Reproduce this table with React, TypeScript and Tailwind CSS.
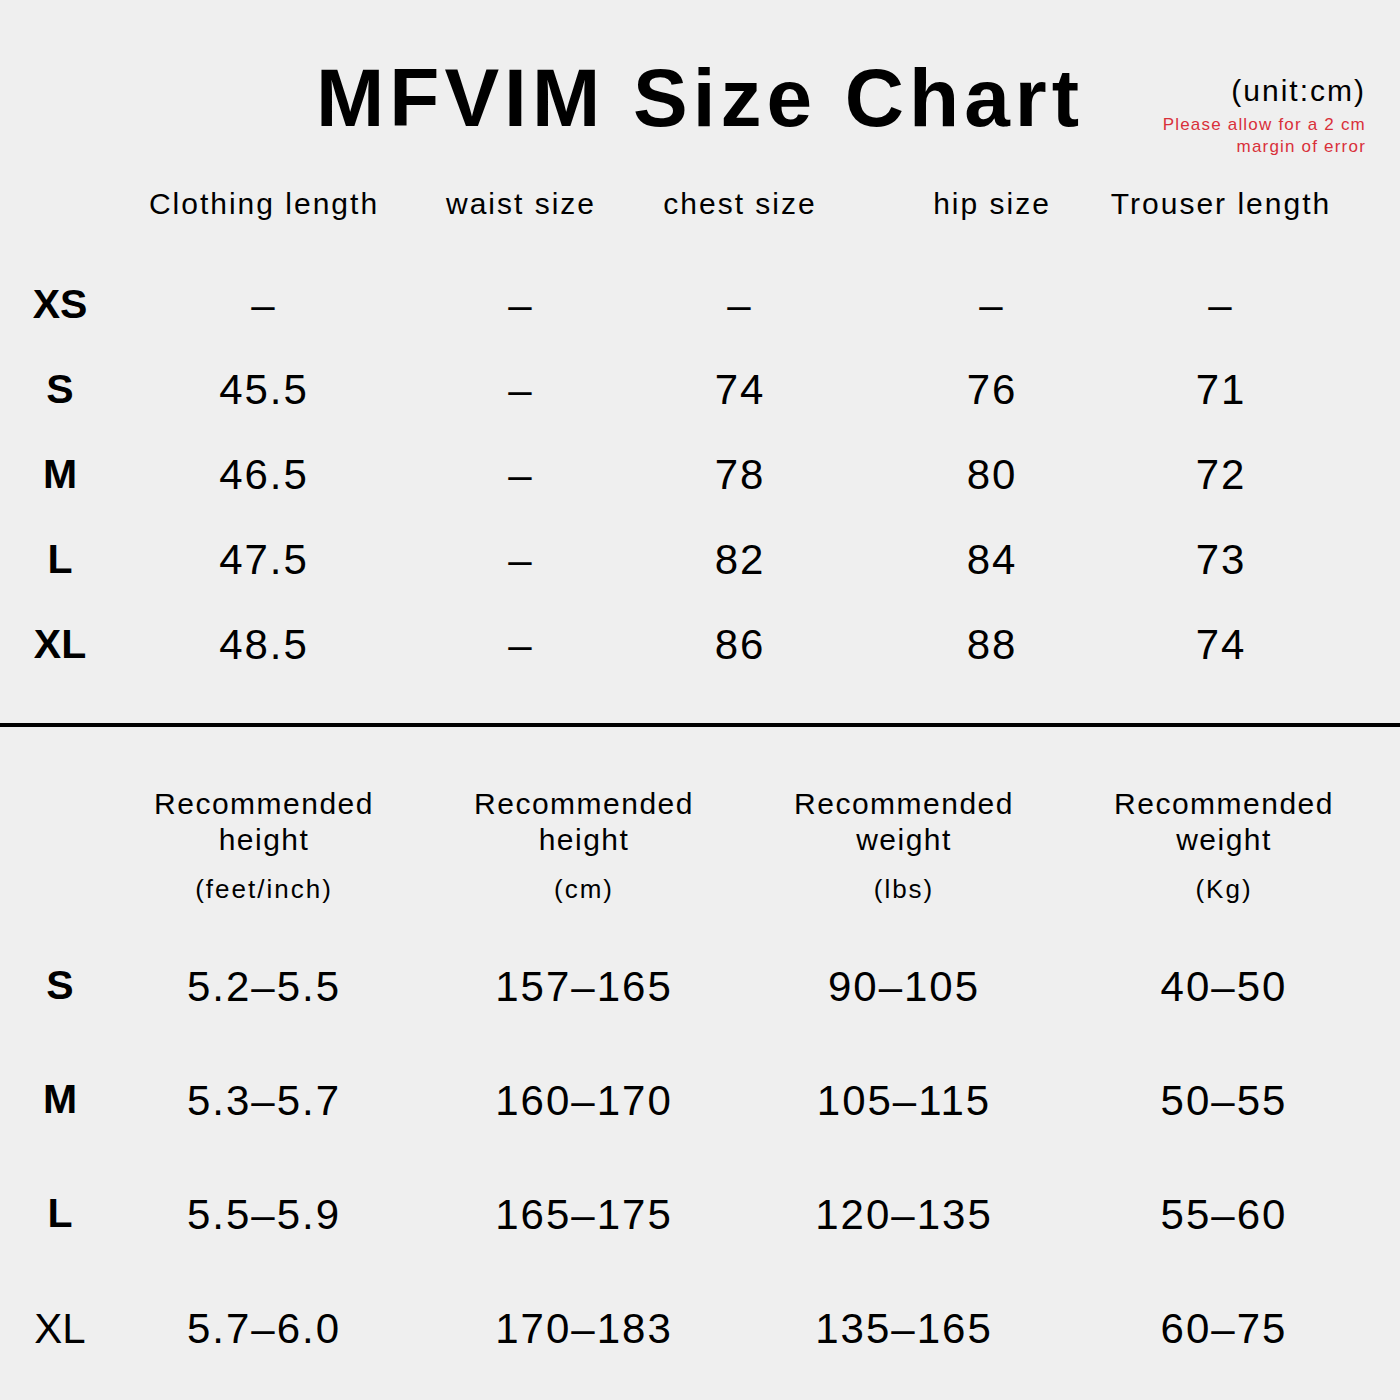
const sizeRows = [
  { size: 'XS', values: ['–', '–', '–', '–', '–'] },
  { size: 'S', values: ['45.5', '–', '74', '76', '71'] },
  { size: 'M', values: ['46.5', '–', '78', '80', '72'] },
  { size: 'L', values: ['47.5', '–', '82', '84', '73'] },
  { size: 'XL', values: ['48.5', '–', '86', '88', '74'] },
];

const measureHeaders = ['Clothing length', 'waist size', 'chest size', 'hip size', 'Trouser length'];

const recHeaders = [
  { title: 'Recommended', sub: 'height', unit: '(feet/inch)' },
  { title: 'Recommended', sub: 'height', unit: '(cm)' },
  { title: 'Recommended', sub: 'weight', unit: '(lbs)' },
  { title: 'Recommended', sub: 'weight', unit: '(Kg)' },
];

const recRows = [
  { size: 'S', bold: true, values: ['5.2–5.5', '157–165', '90–105', '40–50'] },
  { size: 'M', bold: true, values: ['5.3–5.7', '160–170', '105–115', '50–55'] },
  { size: 'L', bold: true, values: ['5.5–5.9', '165–175', '120–135', '55–60'] },
  { size: 'XL', bold: false, values: ['5.7–6.0', '170–183', '135–165', '60–75'] },
];

const topGrid = 'grid grid-cols-[120px_288px_226px_212px_292px_166px]';
const bottomGrid = 'grid grid-cols-[120px_288px_352px_288px_352px]';

export default function App() {
  return (
    <div className="w-[1400px] h-[1400px] bg-[#efefef] text-black font-['Liberation_Sans',Arial,sans-serif] overflow-hidden">
      {/* Title */}
      <div className="h-[173px] grid grid-cols-[1fr_auto_1fr]">
        <div />
        <h1 className="pt-[57px] text-[82px] leading-none font-bold tracking-[5px] whitespace-nowrap">
          MFVIM Size Chart
        </h1>
        <div className="flex flex-col items-end pr-[34px] pt-[76px]">
          <div className="text-[30px] leading-[30px] tracking-[2px]">(unit:cm)</div>
          <div className="mt-[8px] text-[17px] leading-[22px] tracking-[1.2px] text-[#d9303a] text-right">
            <div>Please allow for a 2 cm</div>
            <div>margin of error</div>
          </div>
        </div>
      </div>

      {/* Measurements */}
      <div className={`${topGrid} h-[60px]`}>
        <div />
        {measureHeaders.map(h => (
          <div key={h} className="flex items-center justify-center text-[30px] tracking-[2px] whitespace-nowrap">
            {h}
          </div>
        ))}
      </div>
      <div className="mt-[29px]">
        {sizeRows.map(row => (
          <div key={row.size} className={`${topGrid} h-[85px]`}>
            <div className="flex items-center justify-center text-[41px] font-bold">{row.size}</div>
            {row.values.map((v, i) => (
              <div key={i} className="flex items-center justify-center text-[42px] tracking-[2px] whitespace-nowrap">
                {v}
              </div>
            ))}
          </div>
        ))}
      </div>

      <div className="mt-[36px] h-[4px] bg-black" />

      {/* Recommendations */}
      <div className={`${bottomGrid} mt-[59px]`}>
        <div />
        {recHeaders.map((h, i) => (
          <div key={i} className="flex flex-col items-center">
            <div className="text-[30px] leading-[36px] tracking-[1.5px]">{h.title}</div>
            <div className="text-[30px] leading-[36px] tracking-[1.5px]">{h.sub}</div>
            <div className="mt-[16px] text-[26px] leading-[30px] tracking-[2px]">{h.unit}</div>
          </div>
        ))}
      </div>
      <div className="mt-[25px]">
        {recRows.map(row => (
          <div key={row.size} className={`${bottomGrid} h-[114px]`}>
            <div className={row.bold ? 'flex items-center justify-center text-[41px] font-bold' : 'flex items-center justify-center text-[42px]'}>
              {row.size}
            </div>
            {row.values.map((v, i) => (
              <div key={i} className="flex items-center justify-center text-[42px] tracking-[2px] whitespace-nowrap">
                {v}
              </div>
            ))}
          </div>
        ))}
      </div>
    </div>
  );
}
